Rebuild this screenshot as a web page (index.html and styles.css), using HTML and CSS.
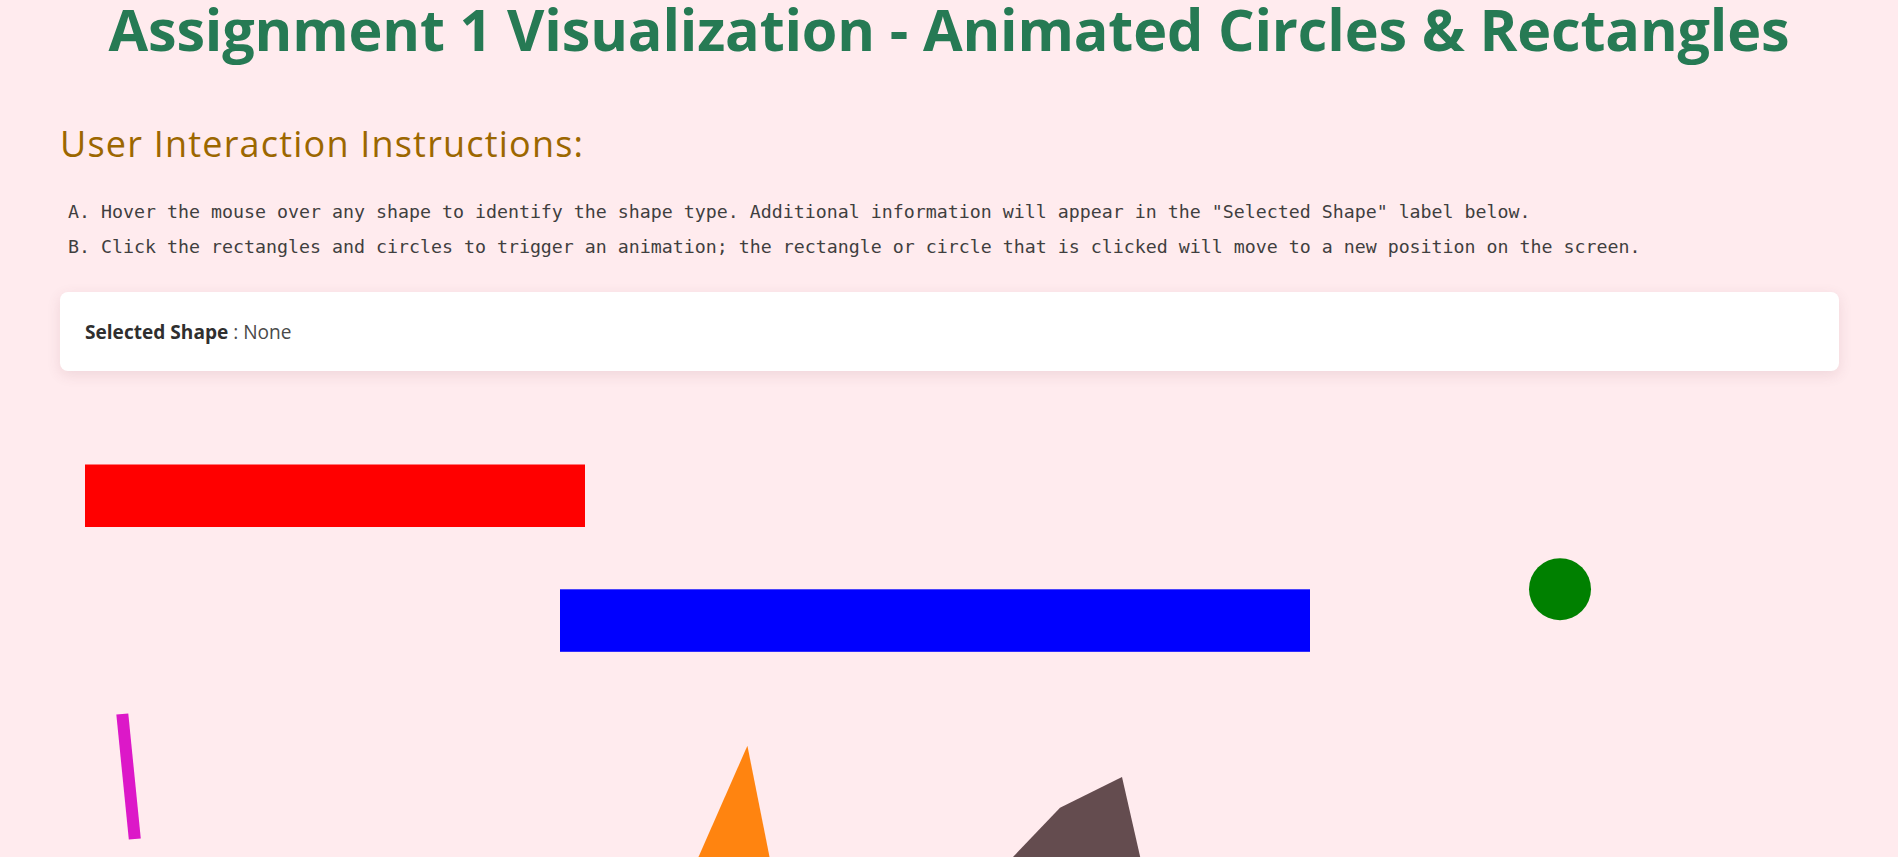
FILE: index.html
```html
<!DOCTYPE html>
<html lang="en">
<head>
<meta charset="utf-8">
<title>Assignment 1 Visualization</title>
<link rel="stylesheet" href="styles.css">
</head>
<body>
<h1 class="title">Assignment 1 Visualization - Animated Circles &amp; Rectangles</h1>
<main class="container">
  <h2 class="subtitle">User Interaction Instructions:</h2>
  <ol class="instructions">
    <li>Hover the mouse over any shape to identify the shape type. Additional information will appear in the "Selected Shape" label below.</li>
    <li>Click the rectangles and circles to trigger an animation; the rectangle or circle that is clicked will move to a new position on the screen.</li>
  </ol>
  <div class="card">
    <span class="card-label">Selected Shape</span><span class="card-value">&nbsp;: None</span>
  </div>
  <svg class="canvas" width="1778" height="467" viewBox="0 0 1778 467">
    <rect x="25" y="74.5" width="500" height="62.5" fill="#ff0000"/>
    <rect x="500" y="199.3" width="750" height="62.5" fill="#0000ff"/>
    <circle cx="1500" cy="199.2" r="31" fill="#008000"/>
    <line x1="62.3" y1="324" x2="74.8" y2="449" stroke="#dc18c8" stroke-width="12"/>
    <polygon points="687.4,355.7 580,600 736,600" fill="#ff8410"/>
    <polygon points="1062,387 1000,417.7 953,467 1080.2,467" fill="#644c4f"/>
  </svg>
</main>
</body>
</html>
```

FILE: styles.css
```css
html, body {
  margin: 0;
  padding: 0;
}

body {
  background: #ffebee;
  font-family: "Open Sans", "Noto Sans", sans-serif;
  overflow: hidden;
}

.title {
  margin: 0 0 66px;
  font-size: 57.5px;
  line-height: 58px;
  font-weight: 700;
  letter-spacing: -0.15px;
  color: #267a54;
  text-align: center;
  white-space: nowrap;
}

.container {
  padding: 0 59px 0 60px;
}

.subtitle {
  margin: 0;
  font-size: 36px;
  line-height: 40px;
  font-weight: 400;
  letter-spacing: 1.2px;
  color: #9c6700;
}

.instructions {
  margin: 31px 0 0;
  padding: 0 0 0 8px;
  list-style: upper-alpha inside;
  font-family: "DejaVu Sans Mono", "Liberation Mono", monospace;
  font-size: 18.28px;
  line-height: 34.6px;
  color: #3f3f3f;
}

.card {
  margin-top: 28px;
  height: 79px;
  box-sizing: border-box;
  padding: 0 25px;
  display: flex;
  align-items: center;
  background: #ffffff;
  border-radius: 8px;
  box-shadow: 0 4px 14px rgba(120, 60, 70, 0.12);
  font-size: 19.1px;
}

.card-label {
  font-weight: 700;
  color: #2f2f2f;
}

.card-value {
  color: #4a4a4a;
}

.canvas {
  display: block;
  margin-top: 19px;
  overflow: hidden;
}
```
